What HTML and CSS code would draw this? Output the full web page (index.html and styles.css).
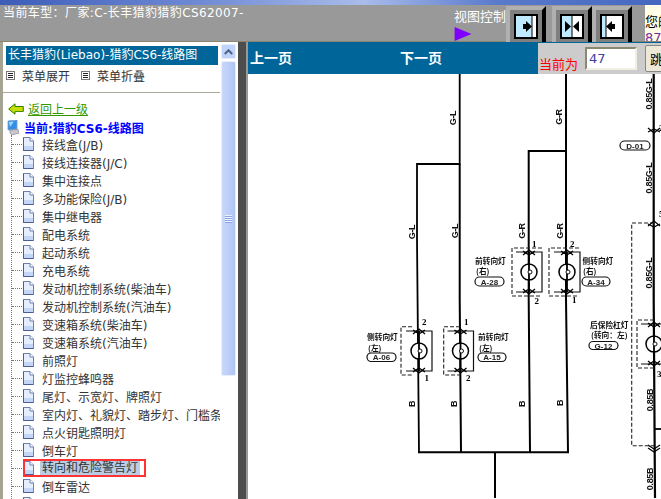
FILE: index.html
```html
<!DOCTYPE html>
<html lang="zh-CN">
<head>
    <meta charset="UTF-8">
    <title>线路图</title>
    <link rel="stylesheet" href="styles.css">
</head>
<body>
    <svg class="sprites" width="0" height="0">
        <symbol id="doc" viewBox="0 0 12 14">
            <path d="M1.5 .5H8L11.5 4V13.5H1.5Z" fill="#e4eeff" stroke="#6f7fb0"/>
            <path d="M2 9H11V13H2Z" fill="#c3d6f6"/>
            <path d="M8 .5V4H11.5" fill="#fff" stroke="#6f7fb0"/>
            <path d="M1.5 .5V13.5H11.5" fill="none" stroke="#4c5c94"/>
        </symbol>
        <symbol id="menu" viewBox="0 0 9 9">
            <rect x=".5" y=".5" width="8" height="8" fill="#fff" stroke="#777"/>
            <path d="M2 2.5H7M2 4.5H7M2 6.5H7" stroke="#222"/>
        </symbol>
        <symbol id="lamp" viewBox="-16 -24 32 48">
            <path d="M-13-20H13V20H-13M13-20V20" fill="none" stroke="#111" stroke-width="1.2"/>
            <circle r="8" fill="#fff" stroke="#000" stroke-width="1.5"/>
            <path d="M0-20V20" stroke="#000" stroke-width="1.8"/>
            <circle cx="1" r="2" fill="#fff" stroke="#111" stroke-width="1"/>
            <path d="M-6-17 0-22 6-17M-6-21 0-17 6-21M-6 17 0 22 6 17M-6 21 0 17 6 21" fill="none" stroke="#000" stroke-width="1.3"/>
        </symbol>
    </svg>

    <div class="top-strip"></div>

    <header class="topbar">
        <div class="car-title">当前车型：厂家:C-长丰猎豹猎豹CS62007-</div>
        <div class="view-control">
            <span>视图控制</span>
            <svg class="view-mark" width="18" height="15" viewBox="0 0 18 15"><path d="M0 0 18 7.5 0 15Z" fill="#8000ff"/></svg>
        </div>
        <button class="view-btn">
            <svg width="24" height="25" viewBox="0 0 24 25">
                <rect x="1" y="1" width="22" height="23" fill="#bfe9ff" stroke="#000" stroke-width="2"/>
                <rect x="18" y="2" width="4" height="21" fill="#fff"/>
                <path d="M18 1V24" stroke="#000"/>
                <path d="M12 7 18 12.5 12 18ZM9 10H12V15H9Z" fill="#000"/>
            </svg>
        </button>
        <button class="view-btn view-btn-pair">
            <svg width="24" height="25" viewBox="0 0 24 25">
                <rect x="1" y="1" width="22" height="23" fill="#fff" stroke="#000" stroke-width="2"/>
                <rect x="2" y="2" width="10" height="21" fill="#bfe9ff"/>
                <path d="M12 1V24" stroke="#000"/>
                <path d="M5 7 11 12.5 5 18ZM19 7 13 12.5 19 18Z" fill="#000"/>
            </svg>
        </button>
        <button class="view-btn">
            <svg width="24" height="25" viewBox="0 0 24 25">
                <rect x="1" y="1" width="22" height="23" fill="#fff" stroke="#000" stroke-width="2"/>
                <rect x="2" y="2" width="4" height="21" fill="#bfe9ff"/>
                <path d="M6 1V24" stroke="#000"/>
                <path d="M12 7 6 12.5 12 18ZM15 10H12V15H15Z" fill="#000"/>
            </svg>
        </button>
        <div class="notice">
            <div>您的</div>
            <div class="notice-num">87</div>
        </div>
    </header>

    <main class="layout">
        <aside class="side">
            <div class="side-body">
                <div class="side-title">长丰猎豹(Liebao)-猎豹CS6-线路图</div>
                <div class="menu-actions">
                    <svg width="9" height="9"><use href="#menu"/></svg><span>菜单展开</span>
                    <svg class="menu-second" width="9" height="9"><use href="#menu"/></svg><span>菜单折叠</span>
                </div>
                <div class="back-row">
                    <svg width="16" height="12" viewBox="0 0 16 12">
                        <path d="M.7 6 7 .8V3.5H15.3V8.5H7V11.2Z" fill="#c4e000" stroke="#2f7a00"/>
                        <path d="M7 8H15V8.5H7Z" fill="#5aa000"/>
                    </svg>
                    <a href="#">返回上一级</a>
                </div>
                <div class="current-row">
                    <svg width="12" height="15" viewBox="0 0 12 15">
                        <path d="M1 1 10 0V9L1 10Z" fill="#2f8fe8" stroke="#7c9cc4" stroke-width=".8"/>
                        <path d="M2 2 7 1.5 3 7Z" fill="#9fd8ff"/>
                        <path d="M3 10 11 9.5 12 13 5 15 3 13Z" fill="#c9c9d4" stroke="#777" stroke-width=".6"/>
                    </svg>
                    <span>当前:猎豹CS6-线路图</span>
                </div>
                <ul class="tree">
                    <li><i></i><svg width="12" height="14"><use href="#doc"/></svg><span>接线盒(J/B)</span></li>
                    <li><i></i><svg width="12" height="14"><use href="#doc"/></svg><span>接线连接器(J/C)</span></li>
                    <li><i></i><svg width="12" height="14"><use href="#doc"/></svg><span>集中连接点</span></li>
                    <li><i></i><svg width="12" height="14"><use href="#doc"/></svg><span>多功能保险(J/B)</span></li>
                    <li><i></i><svg width="12" height="14"><use href="#doc"/></svg><span>集中继电器</span></li>
                    <li><i></i><svg width="12" height="14"><use href="#doc"/></svg><span>配电系统</span></li>
                    <li><i></i><svg width="12" height="14"><use href="#doc"/></svg><span>起动系统</span></li>
                    <li><i></i><svg width="12" height="14"><use href="#doc"/></svg><span>充电系统</span></li>
                    <li><i></i><svg width="12" height="14"><use href="#doc"/></svg><span>发动机控制系统(柴油车)</span></li>
                    <li><i></i><svg width="12" height="14"><use href="#doc"/></svg><span>发动机控制系统(汽油车)</span></li>
                    <li><i></i><svg width="12" height="14"><use href="#doc"/></svg><span>变速箱系统(柴油车)</span></li>
                    <li><i></i><svg width="12" height="14"><use href="#doc"/></svg><span>变速箱系统(汽油车)</span></li>
                    <li><i></i><svg width="12" height="14"><use href="#doc"/></svg><span>前照灯</span></li>
                    <li><i></i><svg width="12" height="14"><use href="#doc"/></svg><span>灯监控蜂鸣器</span></li>
                    <li><i></i><svg width="12" height="14"><use href="#doc"/></svg><span>尾灯、示宽灯、牌照灯</span></li>
                    <li><i></i><svg width="12" height="14"><use href="#doc"/></svg><span>室内灯、礼貌灯、踏步灯、门槛条灯</span></li>
                    <li><i></i><svg width="12" height="14"><use href="#doc"/></svg><span>点火钥匙照明灯</span></li>
                    <li><i></i><svg width="12" height="14"><use href="#doc"/></svg><span>倒车灯</span></li>
                    <li class="marked"><i></i><div class="marked-box"><svg width="12" height="14"><use href="#doc"/></svg><span>转向和危险警告灯</span></div></li>
                    <li><i></i><svg width="12" height="14"><use href="#doc"/></svg><span>倒车雷达</span></li>
                    <li><i></i><svg width="12" height="14"><use href="#doc"/></svg><span>制动灯</span></li>
                </ul>
            </div>
            <div class="scrollbar">
                <div class="scroll-btn">
                    <svg width="9" height="6" viewBox="0 0 9 6"><path d="M.8 5 4.5 1.3 8.2 5" fill="none" stroke="#4d6185" stroke-width="2"/></svg>
                </div>
                <div class="scroll-thumb"><div class="scroll-grip"></div></div>
            </div>
        </aside>

        <div class="divider"></div>

        <section class="viewer">
            <div class="pager">
                <a class="page-link page-prev" href="#">上一页</a>
                <a class="page-link page-next" href="#">下一页</a>
                <div class="jump">
                    <label>当前为</label>
                    <input class="jump-input" value="47">
                    <button class="jump-btn">跳转</button>
                </div>
            </div>
            <svg class="diagram" width="414" height="424" viewBox="247 75 414 424">
                <!-- wires -->
                <g fill="none" stroke="#000">
                    <path d="M458.700 75V165H416V240L418 453.300" stroke-width="1.800"/>
                    <path d="M458.700 165V300L460 453.300" stroke-width="2"/>
                    <path d="M565 75V152H527.700V300L529 453.300" stroke-width="2"/>
                    <path d="M565 152V300L567 453.300" stroke-width="2"/>
                    <path d="M417 453.300H568" stroke-width="2"/>
                    <path d="M494 453.300V499" stroke-width="2"/>
                    <path d="M652.700 75V300L654 499" stroke-width="2.200"/>
                    <path d="M654 430H661" stroke-width="1.800"/>
                </g>
                <!-- lamps with their dashed housings -->
                <g fill="none" stroke="#222" stroke-width="1.100" stroke-dasharray="4 2">
                    <path d="M541 249H511V297H541"/>
                    <path d="M578 249H548V297H578"/>
                    <path d="M411 327.700H400V376H411"/>
                    <path d="M459 327.700H442.700V376H459"/>
                    <path d="M653 321H636V369H653"/>
                    <path d="M653 224H630.700V446.700H653"/>
                </g>
                <use href="#lamp" x="512" y="249" width="32" height="48"/>
                <use href="#lamp" x="550" y="249" width="32" height="48"/>
                <use href="#lamp" x="402" y="328" width="32" height="48"/>
                <use href="#lamp" x="443.500" y="328" width="32" height="48"/>
                <use href="#lamp" x="637" y="321" width="32" height="48"/>
                <path d="M647 129 653 134 659 129M647 133 653 130 659 133M647 227 653 222 659 227M647 225 653 228 659 225M647 449 653 453 659 449M647 446 653 450 659 446" fill="none" stroke="#000" stroke-width="1.200"/>

                <!-- wire names -->
                <g class="wire-name">
                    <text transform="translate(455 119) rotate(-90)">G-L</text>
                    <text transform="translate(561 118) rotate(-90)">G-R</text>
                    <text transform="translate(414 233) rotate(-90)">G-L</text>
                    <text transform="translate(456.500 232) rotate(-90)">G-L</text>
                    <text transform="translate(524 232) rotate(-90)">G-R</text>
                    <text transform="translate(562 232) rotate(-90)">G-R</text>
                    <text transform="translate(414 405) rotate(-90)">B</text>
                    <text transform="translate(455.500 405) rotate(-90)">B</text>
                    <text transform="translate(524 405) rotate(-90)">B</text>
                    <text transform="translate(561.500 404) rotate(-90)">B</text>
                    <text transform="translate(651 95) rotate(-90)">0.85G-L</text>
                    <text transform="translate(650.500 179) rotate(-90)">0.85G-L</text>
                    <text transform="translate(651 274) rotate(-90)">0.85G-L</text>
                    <text transform="translate(651.500 401) rotate(-90)">0.85B</text>
                    <text transform="translate(652 480) rotate(-90)">0.85B</text>
                </g>

                <!-- pin numbers -->
                <g class="pin-num">
                    <text x="531" y="248">1</text>
                    <text x="569" y="248">2</text>
                    <text x="533.500" y="305">2</text>
                    <text x="571" y="304">1</text>
                    <text x="421" y="326">2</text>
                    <text x="463" y="326">1</text>
                    <text x="423.500" y="382">1</text>
                    <text x="465" y="382">2</text>
                    <text x="656" y="378">3</text>
                    <text x="658" y="132">2</text>
                    <text x="658" y="218">5</text>
                </g>

                <!-- lamp captions -->
                <g class="lamp-name">
                    <text x="474" y="264.500">前转向灯</text>
                    <text x="475" y="275">(右)</text>
                    <text x="581.500" y="264.500">侧转向灯</text>
                    <text x="582" y="275">(右)</text>
                    <text x="366" y="341">侧转向灯</text>
                    <text x="367" y="351.500">(左)</text>
                    <text x="477" y="341">前转向灯</text>
                    <text x="478" y="351.500">(左)</text>
                    <text x="589" y="328.500">后保险杠灯</text>
                    <text x="590" y="339">(转向：左)</text>
                </g>

                <!-- connector codes -->
                <g class="code-pill">
                    <rect x="474" y="278" width="29" height="9" rx="4.500"/>
                    <rect x="581" y="278" width="28" height="9" rx="4.500"/>
                    <rect x="619" y="142" width="30" height="9" rx="4.500"/>
                    <rect x="366" y="354" width="29" height="8.500" rx="4.200"/>
                    <rect x="477" y="354" width="28" height="8.500" rx="4.200"/>
                    <rect x="588" y="342.500" width="29" height="8" rx="4"/>
                </g>
                <g class="code-text">
                    <text x="488.500" y="285.500">A-28</text>
                    <text x="595" y="285.500">A-34</text>
                    <text x="634" y="149.500">D-01</text>
                    <text x="380.500" y="361">A-06</text>
                    <text x="491" y="361">A-15</text>
                    <text x="602.500" y="349.500">G-12</text>
                </g>
            </svg>
        </section>
    </main>
</body>
</html>
```

FILE: styles.css
```css
html, body {
    margin: 0;
    height: 100%;
    overflow: hidden;
}

body {
    display: flex;
    flex-direction: column;
    background: #999;
    font-family: "DejaVu Sans", "Noto Sans CJK SC", sans-serif;
    font-size: 12px;
}

.sprites {
    display: block;
    height: 0;
}

.top-strip {
    height: 5px;
    flex: none;
    background: linear-gradient(90deg, #3c5cb8 0%, #6f8ad4 30%, #a9bcea 55%, #5a7acb 75%, #4568c0 100%);
}

/* top bar */
.topbar {
    height: 37px;
    flex: none;
    display: flex;
    align-items: flex-end;
    background: #999;
    color: #fff;
    box-sizing: border-box;
    border-bottom: 1px solid #8a8470;
}

.car-title {
    align-self: flex-start;
    width: 454px;
    box-sizing: border-box;
    padding: 0 0 0 3px;
    line-height: 17px;
    letter-spacing: .4px;
    white-space: nowrap;
}

.view-control {
    width: 52px;
    align-self: stretch;
    display: flex;
    flex-direction: column;
    padding-top: 3px;
    box-sizing: border-box;
    font-size: 13px;
    line-height: 18px;
    white-space: nowrap;
}

.view-mark {
    display: block;
    margin-top: 1px;
}

.view-btn {
    width: 40px;
    height: 36px;
    box-sizing: border-box;
    margin: 0 0 -1px;
    padding: 0 0 0 4px;
    display: flex;
    justify-content: flex-start;
    align-items: flex-start;
    border: 0;
    border-top: 4px solid #b0b0b0;
    border-left: 4px solid #b0b0b0;
    border-right: 4px solid #000;
    background: #808080;
}

.view-btn svg {
    margin-top: 4px;
    display: block;
}

.view-btn-pair {
    margin-left: 6px;
}

.notice {
    align-self: stretch;
    flex: 1;
    margin-left: 13px;
    padding-top: 9px;
    background: #ffffe8;
    color: #000;
    font-size: 13px;
    line-height: 16px;
    overflow: hidden;
    white-space: nowrap;
}

.notice-num {
    color: #7a2fa0;
}

/* main area */
.layout {
    flex: 1;
    min-height: 0;
    display: flex;
}

.side {
    width: 238px;
    flex: none;
    box-sizing: border-box;
    display: flex;
    background: #fff;
    border-left: 3px solid #a5a392;
    overflow: hidden;
}

.side-body {
    width: 217px;
    flex: none;
    overflow: hidden;
    padding-top: 4px;
    color: #333;
}

.side-title {
    margin: 0 2px 0 3px;
    height: 19px;
    padding-left: 2px;
    line-height: 19px;
    background: #006699;
    color: #fff;
    white-space: nowrap;
}

.menu-actions {
    height: 20px;
    display: flex;
    align-items: center;
    gap: 7px;
    padding: 0 0 7px 3px;
    border-bottom: 1px solid #aca899;
    box-sizing: content-box;
}

.menu-second {
    margin-left: 4px;
}

.back-row {
    display: flex;
    align-items: center;
    gap: 4px;
    height: 17px;
    margin-top: 7px;
    padding-left: 5px;
}

.back-row a {
    color: #339900;
}

.current-row {
    display: flex;
    align-items: center;
    gap: 5px;
    height: 16px;
    margin-top: 2px;
    padding-left: 4px;
    color: #0000ff;
    font-weight: bold;
}

.tree {
    list-style: none;
    margin: 0 0 0 8px;
    padding: 0;
    border-left: 1px dotted #777;
}

.tree li {
    height: 18px;
    display: flex;
    align-items: center;
    white-space: nowrap;
}

.tree i {
    width: 10px;
    flex: none;
    border-top: 1px dotted #777;
}

.tree svg {
    flex: none;
    margin-right: 8px;
}

.marked-box {
    display: flex;
    align-items: center;
    height: 14px;
    margin-left: 2.5px;
    outline: 2.5px solid #ff3333;
    padding-right: 4px;
    overflow: hidden;
}

.marked-box svg {
    margin-left: -2.5px;
    margin-right: 6px;
}

.marked-box span {
    background: #b9cde5;
    padding: 0 2px;
    line-height: 14px;
}

/* scrollbar */
.scrollbar {
    width: 15px;
    flex: none;
    margin-left: 1px;
    padding-top: 2px;
    display: flex;
    flex-direction: column;
    gap: 2px;
}

.scroll-btn {
    height: 15px;
    display: flex;
    justify-content: center;
    align-items: center;
    box-sizing: border-box;
    border: 1px solid #e6eefc;
    border-radius: 2px;
    background: #c1d3fb;
}

.scroll-thumb {
    height: 315px;
    box-sizing: border-box;
    display: flex;
    align-items: center;
    justify-content: center;
    border: 1px solid #e6eefc;
    border-radius: 2px;
    background: linear-gradient(90deg, #c9d8fb, #b9cdf8 60%, #aec4f2);
}

.scroll-grip {
    width: 7px;
    height: 8px;
    background: repeating-linear-gradient(180deg, #eef3ff 0 1px, #8aa5e0 1px 2px);
}

.divider {
    width: 8px;
    flex: none;
    margin-right: 2px;
    background: #4d4d4d;
}

/* right side */
.viewer {
    flex: 1;
    min-width: 0;
    background: #fff;
    overflow: hidden;
}

.pager {
    height: 32px;
    display: flex;
    align-items: center;
    background: #006699;
    box-sizing: border-box;
}

.page-link {
    color: #fff;
    font-size: 14px;
    font-weight: bold;
    text-decoration: none;
    line-height: 32px;
    white-space: nowrap;
}

.page-prev {
    margin-left: 2px;
}

.page-next {
    margin-left: 108px;
}

.jump {
    margin-left: auto;
    width: 123px;
    height: 31px;
    flex: none;
    box-sizing: border-box;
    margin-top: 1px;
    display: flex;
    align-items: center;
    background: #cccccc;
    color: #ff0000;
    font-size: 13px;
    overflow: hidden;
    white-space: nowrap;
    padding-left: 1px;
}

.jump label {
    width: 46px;
    flex: none;
    padding-top: 9px;
}

.jump-input {
    width: 52px;
    height: 23px;
    flex: none;
    box-sizing: border-box;
    padding: 0 2px;
    border: 2px solid;
    border-color: #8a8870 #f1efe2 #f1efe2 #8a8870;
    background: #fff;
    color: #4040a0;
    font-family: "DejaVu Sans", sans-serif;
    font-size: 13px;
}

.jump-btn {
    flex: none;
    width: 50px;
    height: 27px;
    margin-left: 8px;
    padding: 0 0 0 4px;
    box-sizing: border-box;
    border: 1px solid #888;
    border-radius: 2px;
    background: #ece9d8;
    color: #000;
    font-family: "Noto Sans CJK SC", sans-serif;
    font-size: 13px;
    text-align: left;
}

.diagram {
    display: block;
    filter: blur(.35px);
}

.wire-name text {
    font-family: "Liberation Sans", sans-serif;
    font-size: 9px;
    font-weight: bold;
    letter-spacing: -.3px;
    fill: #111;
    text-anchor: middle;
}

.pin-num text {
    font-family: "Liberation Serif", serif;
    font-size: 9px;
    font-weight: bold;
    fill: #000;
}

.lamp-name text {
    font-family: "Noto Sans CJK SC", sans-serif;
    font-size: 7.7px;
    font-weight: bold;
    fill: #111;
}

.code-pill rect {
    fill: #fff;
    stroke: #111;
    stroke-width: 1.2;
}

.code-text text {
    font-family: "Liberation Sans", sans-serif;
    font-size: 8px;
    font-weight: bold;
    fill: #222;
    text-anchor: middle;
}
```
